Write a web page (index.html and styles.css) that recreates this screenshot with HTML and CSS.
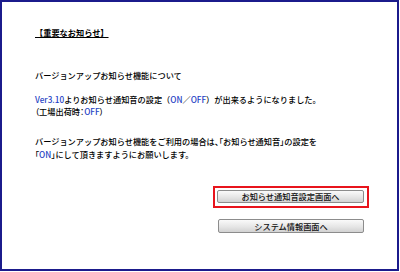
FILE: index.html
```html
<!DOCTYPE html>
<html lang="ja">
<head>
<meta charset="utf-8">
<link rel="stylesheet" href="styles.css">
</head>
<body>
<div class="frame">
  <div class="content">
    <p class="heading">【重要なお知らせ】</p>
    <p class="title">バージョンアップお知らせ機能について</p>
    <p class="para1"><span class="blue">Ver3.10</span>よりお知らせ通知音の設定（<span class="blue">ON</span>／<span class="blue">OFF</span>）が出来るようになりました。<br><span class="pp">（</span>工場出荷時<span class="pp">：</span><span class="blue">OFF</span><span class="pp">）</span></p>
    <p class="para2">バージョンアップお知らせ機能をご利用の場合は<span class="pp">、「</span>お知らせ通知音<span class="pp">」</span>の設定を<br><span class="pp">「</span><span class="blue">ON</span><span class="pp">」</span>にして頂きますようにお願いします。</p>
  </div>
  <div class="actions">
    <div class="highlight">
      <button class="btn btn-wide" type="button">お知らせ通知音設定画面へ</button>
    </div>
    <button class="btn btn-second" type="button">システム情報画面へ</button>
  </div>
</div>
</body>
</html>
```

FILE: styles.css
```css
html, body {
  margin: 0;
  padding: 0;
  background: #ffffff;
}

body {
  font-family: "Noto Sans CJK JP", "Noto Sans", sans-serif;
  font-size: 8.2px;
  font-weight: 500;
  color: #000000;
}

.frame {
  box-sizing: border-box;
  width: 399px;
  height: 271px;
  border: 2px solid #1b1b8c;
  display: flex;
  flex-direction: column;
}

.content {
  padding: 24px 0 0 33px;
}

.content p {
  margin: 0;
  white-space: nowrap;
}

.heading {
  line-height: 13px;
  font-weight: bold;
  text-decoration: underline;
}

.title {
  margin-top: 30px !important;
  line-height: 13px;
}

.para1 {
  margin-top: 11px !important;
  line-height: 12px;
}

.para2 {
  margin-top: 18px !important;
  line-height: 13px;
}

.pp {
  font-feature-settings: "palt";
}

.blue {
  color: #1f3fc4;
}

.actions {
  margin-top: 25px;
  align-self: flex-end;
  margin-right: 28px;
  display: flex;
  flex-direction: column;
  align-items: flex-end;
}

.highlight {
  border: 2px solid #e8141c;
  padding: 2px 3px 3px 2px;
}

.btn {
  box-sizing: border-box;
  height: 13px;
  padding: 0;
  border: 1px solid #8c8c8c;
  border-radius: 2px;
  background: linear-gradient(#fafafa, #e6e6e6 55%, #d2d2d2);
  font-family: "Noto Sans CJK JP", sans-serif;
  font-size: 8.2px;
  font-weight: 500;
  line-height: 11px;
  color: #111111;
  text-align: center;
}

.btn-wide {
  width: 147px;
  display: block;
}

.btn-second {
  width: 146px;
  margin-top: 11px;
  margin-right: 5px;
  height: 14px;
}
```
